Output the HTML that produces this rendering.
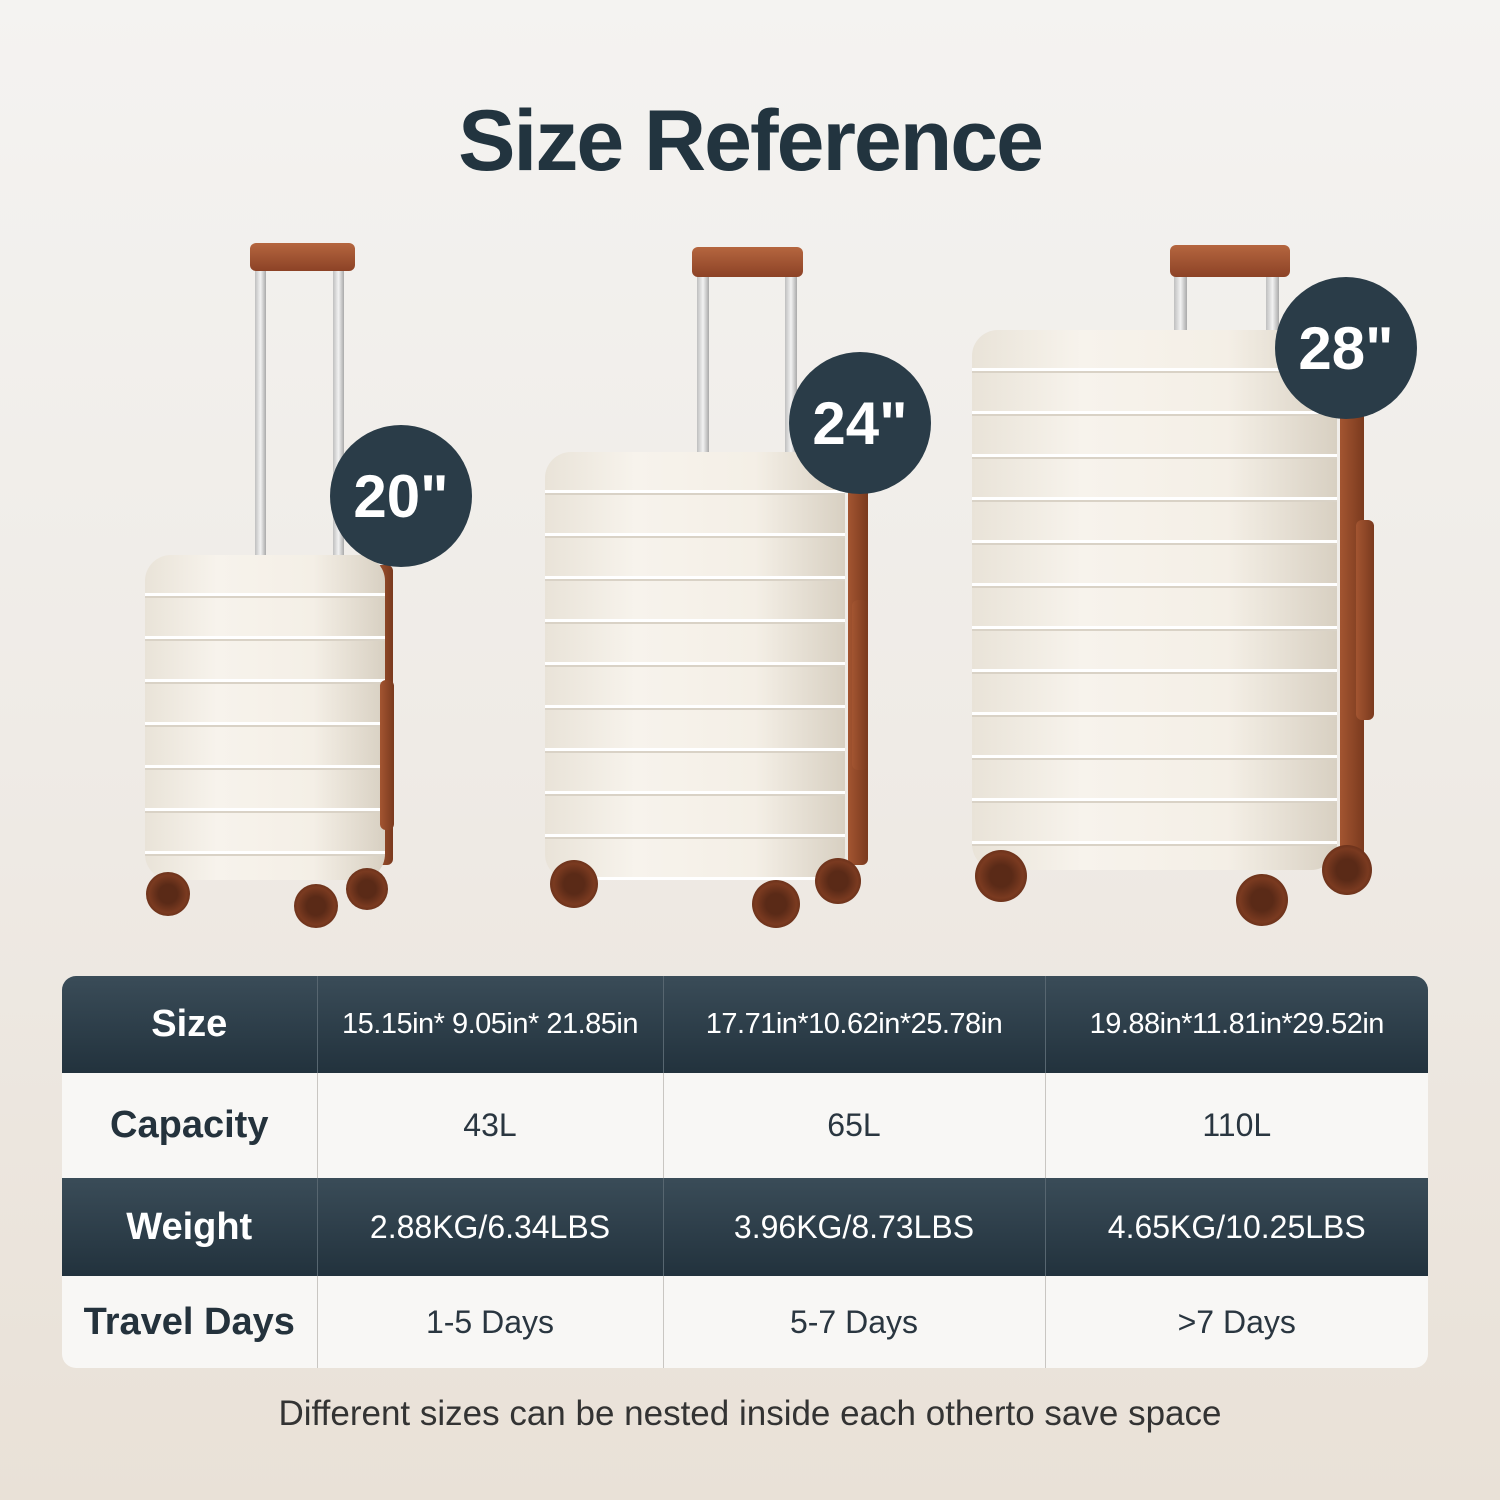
<!DOCTYPE html>
<html><head><meta charset="utf-8">
<style>
*{margin:0;padding:0;box-sizing:border-box}
body{width:1500px;height:1500px;position:relative;overflow:hidden;font-family:"Liberation Sans",sans-serif;background:linear-gradient(#f4f3f1 0%,#efebe6 50%,#e9e1d7 100%)}
h1{position:absolute;left:0;width:1500px;top:92px;text-align:center;font-size:86px;font-weight:bold;color:#22343f;letter-spacing:-2px}
.pole{position:absolute;background:linear-gradient(90deg,#bfbfbf,#f2f2f2,#a9a9a9);border-radius:2px}
.hdl{position:absolute;background:linear-gradient(#b5663f,#8c4226);border-radius:6px}
.body{position:absolute;border-radius:26px;background:
 repeating-linear-gradient(180deg,rgba(0,0,0,0) 0 38px,#fff 38px 41px,#d9d2c6 41px 43px),
 linear-gradient(90deg,#e9e3d8,#f7f3ec 30%,#f4efe6 70%,#d8d0c2);}
.zip{position:absolute;background:linear-gradient(90deg,#a35531,#7a3a1e);border-radius:6px}
.wheel{position:absolute;border-radius:50%;background:radial-gradient(circle,#5a2a17 30%,#7a3a20 60%,#4a2010);}
.badge{position:absolute;width:142px;height:142px;border-radius:50%;background:#2a3c48;color:#fff;font-weight:bold;font-size:60px;display:flex;align-items:center;justify-content:center}
table{position:absolute;left:62px;top:976px;width:1366px;border-collapse:collapse;border-radius:14px;overflow:hidden;background:#f8f7f5;table-layout:fixed}
td{text-align:center;border-left:1px solid #c9c6c2;font-size:32px;color:#2a3640;white-space:nowrap}
td:first-child{border-left:none;font-weight:bold;font-size:38px;color:#24323c}
tr.d td{background:linear-gradient(#3a4c58,#22323d);color:#fff;border-left:1px solid #576670}
tr.d td:first-child{color:#fff;border-left:none}
tr.s td{font-size:29px;letter-spacing:-0.5px}
tr.s td:first-child{font-size:38px;letter-spacing:0}
.cap{position:absolute;top:1394px;left:0;width:1500px;text-align:center;font-size:35px;color:#333}
</style></head><body>
<h1>Size Reference</h1>

<div class="pole" style="left:255px;top:262px;width:11px;height:300px"></div>
<div class="pole" style="left:333px;top:262px;width:11px;height:300px"></div>
<div class="hdl" style="left:250px;top:243px;width:105px;height:28px"></div>
<div class="zip" style="left:375px;top:565px;width:18px;height:300px"></div>
<div class="body" style="left:145px;top:555px;width:240px;height:325px"></div>
<div class="zip" style="left:380px;top:680px;width:14px;height:150px"></div>
<div class="wheel" style="left:146px;top:872px;width:44px;height:44px"></div>
<div class="wheel" style="left:294px;top:884px;width:44px;height:44px"></div>
<div class="wheel" style="left:346px;top:868px;width:42px;height:42px"></div>
<div class="badge" style="left:330px;top:425px">20"</div>

<div class="pole" style="left:697px;top:265px;width:12px;height:200px"></div>
<div class="pole" style="left:785px;top:265px;width:12px;height:200px"></div>
<div class="hdl" style="left:692px;top:247px;width:111px;height:30px"></div>
<div class="zip" style="left:848px;top:465px;width:20px;height:400px"></div>
<div class="body" style="left:545px;top:452px;width:300px;height:428px"></div>
<div class="zip" style="left:852px;top:600px;width:16px;height:170px"></div>
<div class="wheel" style="left:550px;top:860px;width:48px;height:48px"></div>
<div class="wheel" style="left:752px;top:880px;width:48px;height:48px"></div>
<div class="wheel" style="left:815px;top:858px;width:46px;height:46px"></div>
<div class="badge" style="left:789px;top:352px">24"</div>

<div class="pole" style="left:1174px;top:265px;width:13px;height:70px"></div>
<div class="pole" style="left:1266px;top:265px;width:13px;height:70px"></div>
<div class="hdl" style="left:1170px;top:245px;width:120px;height:32px"></div>
<div class="zip" style="left:1340px;top:345px;width:24px;height:520px"></div>
<div class="body" style="left:972px;top:330px;width:365px;height:540px"></div>
<div class="zip" style="left:1356px;top:520px;width:18px;height:200px"></div>
<div class="wheel" style="left:975px;top:850px;width:52px;height:52px"></div>
<div class="wheel" style="left:1236px;top:874px;width:52px;height:52px"></div>
<div class="wheel" style="left:1322px;top:845px;width:50px;height:50px"></div>
<div class="badge" style="left:1275px;top:277px">28"</div>

<table>
<colgroup><col style="width:255px"><col style="width:346px"><col style="width:382px"><col style="width:383px"></colgroup>
<tr class="d s" style="height:97px"><td>Size</td><td>15.15in* 9.05in* 21.85in</td><td>17.71in*10.62in*25.78in</td><td>19.88in*11.81in*29.52in</td></tr>
<tr style="height:105px"><td>Capacity</td><td>43L</td><td>65L</td><td>110L</td></tr>
<tr class="d" style="height:98px"><td>Weight</td><td>2.88KG/6.34LBS</td><td>3.96KG/8.73LBS</td><td>4.65KG/10.25LBS</td></tr>
<tr style="height:92px"><td>Travel Days</td><td>1-5 Days</td><td>5-7 Days</td><td>&gt;7 Days</td></tr>
</table>
<div class="cap">Different sizes can be nested inside each otherto save space</div>
</body></html>
